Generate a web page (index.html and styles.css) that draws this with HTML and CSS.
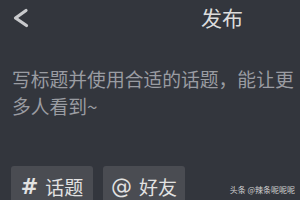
FILE: index.html
```html
<!DOCTYPE html>
<html lang="zh">
<head>
<meta charset="utf-8">
<link rel="stylesheet" href="styles.css">
</head>
<body>
<div class="page">
  <header class="topbar">
    <svg class="back" width="20" height="28" viewBox="0 0 20 28"><path d="M14 7.5 L3.5 15 L14.5 22.5" fill="none" stroke="#c9cacd" stroke-width="3.2" stroke-linecap="round" stroke-linejoin="round"/></svg>
    <span class="title">发布</span>
  </header>
  <p class="hint">写标题并使用合适的话题，能让更多人看到~</p>
  <div class="tags">
    <div class="tag"><span class="sym">#</span><span>话题</span></div>
    <div class="tag"><span class="sym at">@</span><span>好友</span></div>
    <span class="mark">头条 @辣条呢呢呢</span>
  </div>
</div>
</body>
</html>
```
FILE: styles.css
```css
html, body {
  margin: 0;
  padding: 0;
  background: #33363d;
  width: 300px;
  height: 200px;
  overflow: hidden;
  font-family: "Noto Sans CJK SC", "Noto Sans", sans-serif;
}
.page {
  display: flex;
  flex-direction: column;
  height: 200px;
}
.topbar {
  display: flex;
  align-items: center;
  height: 32px;
  padding-left: 12px;
  padding-top: 1px;
}
.back {
  display: block;
}
.title {
  margin-left: 169px;
  font-size: 21px;
  line-height: 28px;
  color: #dcdcdc;
}
.hint {
  margin: 32px 0 0 0;
  padding: 0 0 0 12px;
  font-size: 18.8px;
  line-height: 27px;
  color: #9a9ca2;
}
.tags {
  display: flex;
  align-items: flex-start;
  gap: 10px;
  margin-top: auto;
  padding-left: 11px;
  height: 34px;
  position: relative;
}
.tag {
  width: 82px;
  height: 40px;
  background: #4a4c52;
  border-radius: 3px;
  display: flex;
  align-items: flex-start;
  justify-content: center;
  padding-top: 9px;
  box-sizing: border-box;
  gap: 7px;
  font-size: 19px;
  line-height: 24px;
  color: #e2e2e2;
}
.sym {
  font-family: "DejaVu Sans", sans-serif;
  font-weight: bold;
  font-size: 21px;
}
.at {
  font-weight: normal;
}
.mark {
  position: absolute;
  right: 5px;
  bottom: 5px;
  font-size: 8px;
  line-height: 10px;
  color: #d0d0d0;
}
```
